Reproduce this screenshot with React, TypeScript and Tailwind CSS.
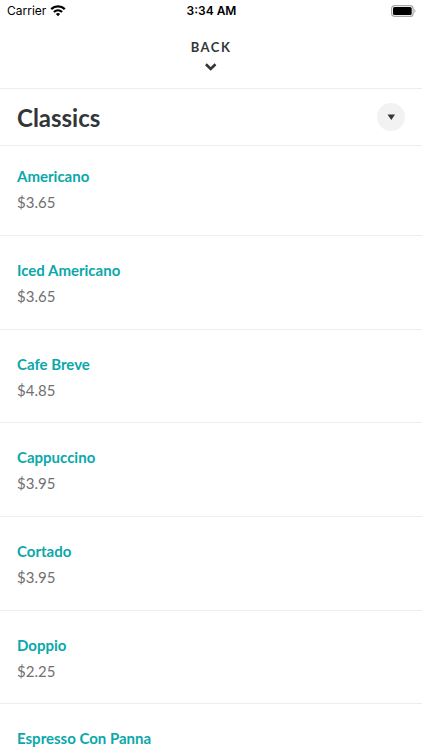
interface Drink {
  name: string;
  price?: string;
}

const drinks: Drink[] = [
  { name: "Americano", price: "$3.65" },
  { name: "Iced Americano", price: "$3.65" },
  { name: "Cafe Breve", price: "$4.85" },
  { name: "Cappuccino", price: "$3.95" },
  { name: "Cortado", price: "$3.95" },
  { name: "Doppio", price: "$2.25" },
  { name: "Espresso Con Panna" },
];

export default function App() {
  return (
    <div className="h-screen overflow-hidden bg-white font-['Lato',sans-serif] text-[#333638]">
      <StatusBar />

      {/* Back */}
      <header className="flex justify-center border-b border-[#eeeeee] pt-[13px] pb-[17px]">
        <button className="flex flex-col items-center gap-1.5">
          <span className="text-[13px] leading-5 font-bold tracking-[1.5px]">BACK</span>
          <svg width="12" height="8" viewBox="0 0 12 8" fill="none" aria-hidden="true">
            <path d="M.9 1.300 5.700 6l4.800-4.700" stroke="#333638" strokeWidth="2.600" />
          </svg>
        </button>
      </header>

      {/* Section title */}
      <div className="flex h-[57px] items-center justify-between border-b border-[#eeeeee] px-[17px]">
        <h1 className="pt-0.5 text-2xl font-bold">Classics</h1>
        <button
          aria-label="Choose category"
          className="flex size-7 items-center justify-center rounded-full bg-[#f2f2f2]"
        >
          <svg width="8" height="6" viewBox="0 0 8 6" aria-hidden="true">
            <path d="M.5.5h7.500L4.300 6z" fill="#333638" />
          </svg>
        </button>
      </div>

      <ul>
        {drinks.map((drink) => (
          <DrinkRow key={drink.name} drink={drink} />
        ))}
      </ul>
    </div>
  );
}

function DrinkRow({ drink }: { drink: Drink }) {
  return (
    <li className="border-b border-[#eeeeee] px-[17px] pt-[22px] pb-[19px] first:pt-[18px] nth-[3n]:pb-[18px]">
      <a href="#" className="block text-[15px] leading-6 font-bold text-[#0aa8aa]">
        {drink.name}
      </a>
      {drink.price && <p className="text-[15px] leading-7 text-[#707070]">{drink.price}</p>}
    </li>
  );
}

function StatusBar() {
  return (
    <div className="grid h-6 grid-cols-3 items-center pr-1.5 pb-0.5 pl-[7px] font-['Inter',sans-serif] text-xs text-black">
      <div className="flex items-center gap-1">
        <span>Carrier</span>
        <svg width="16" height="12" viewBox="0 0 16 12" fill="none" stroke="#000" aria-hidden="true">
          <path d="M1.200 4.200a9.800 9.800 0 0 1 13.600 0" strokeWidth="2.300" />
          <path d="M3.900 7a6 6 0 0 1 8.200 0" strokeWidth="2.100" />
          <path d="M8 11.300 5.900 9.100a3 3 0 0 1 4.200 0z" fill="#000" stroke="none" />
        </svg>
      </div>
      <span className="text-center font-semibold">3:34 AM</span>
      <svg className="justify-self-end" width="25" height="12" viewBox="0 0 25 12" aria-hidden="true">
        <rect x=".6" y=".6" width="21.500" height="10.800" rx="3" fill="none" stroke="#a8a8a8" strokeWidth="1.200" />
        <rect x="2" y="2" width="18.700" height="8" rx="1.500" fill="#000" />
        <path d="M23.400 4v4c1.500-.6 1.500-3.400 0-4z" fill="#a8a8a8" />
      </svg>
    </div>
  );
}
